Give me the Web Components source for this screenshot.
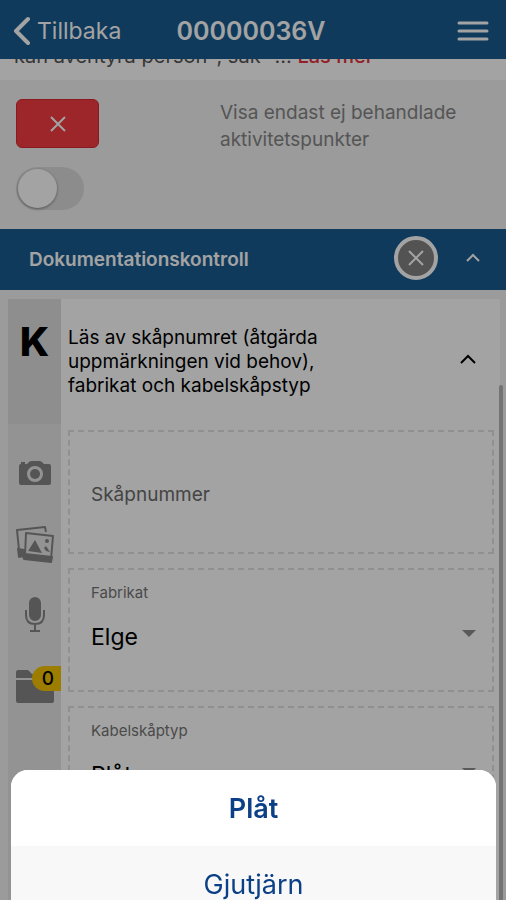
<!DOCTYPE html>
<html lang="sv">
<head>
<meta charset="utf-8">
<meta name="viewport" content="width=device-width, initial-scale=1">
<title>Dokumentationskontroll</title>
<style>
    body {
        margin: 0;
        background: #fff;
        color: #000;
        font-family: Inter, "Liberation Sans", sans-serif;
        overflow: hidden;
    }
</style>
</head>
<body>
<inspection-page>
    <app-header slot="header" heading="00000036V">Tillbaka</app-header>
    <risk-notice>kan äventyra person-, sak- ... <a slot="more" href="#">Läs mer</a></risk-notice>
    <filter-bar>Visa endast ej behandlade aktivitetspunkter</filter-bar>
    <section-header>Dokumentationskontroll</section-header>
    <check-item code="K" files="0">
        <span slot="question">Läs av skåpnumret (åtgärda uppmärkningen vid behov), fabrikat och kabelskåpstyp</span>
        <text-field label="Skåpnummer"></text-field>
        <select-field label="Fabrikat" value="Elge"></select-field>
        <select-field label="Kabelskåptyp" value="Plåt"></select-field>
    </check-item>
    <action-sheet slot="overlay">
        <sheet-option selected>Plåt</sheet-option>
        <sheet-option>Gjutjärn</sheet-option>
    </action-sheet>
</inspection-page>

<script>
(function() {
    const define = (name, html, setup) => {
        const template = document.createElement('template');
        template.innerHTML = html;

        customElements.define(name, class extends HTMLElement {
            constructor() {
                super();
                this.attachShadow({mode: 'open'});
                this.shadowRoot.appendChild(template.content.cloneNode(true));
            }

            connectedCallback() {
                if (setup) {
                    setup(this, this.shadowRoot);
                }
            }
        });
    };

    define('inspection-page', `
        <style>
            :host {
                display: flex;
                flex-direction: column;
                height: 100vh;
            }
            main {
                flex: 1;
                min-height: 0;
                overflow: hidden;
            }
        </style>
        <slot name="header"></slot>
        <main><slot></slot></main>
        <slot name="overlay"></slot>
    `);

    define('app-header', `
        <style>
            :host {
                display: grid;
                grid-template-columns: 1fr auto 1fr;
                align-items: center;
                height: 59px;
                flex: none;
                padding: 2px 16px 0 12px;
                box-sizing: border-box;
                background: #185b91;
                color: #fff;
            }
            button {
                display: flex;
                align-items: center;
                gap: 7px;
                border: 0;
                padding: 0;
                background: none;
                color: inherit;
                font: 23px Inter, sans-serif;
                cursor: pointer;
            }
            .menu {
                justify-self: end;
            }
            h1 {
                margin: 0;
                font-size: 25px;
                font-weight: 600;
            }
            svg {
                display: block;
                fill: none;
                stroke: currentColor;
                stroke-linecap: round;
            }
        </style>
        <button class="back">
            <svg width="18" height="30" stroke-width="4" stroke-linejoin="round"><path d="M16 3 4 15 16 27"/></svg>
            <slot></slot>
        </button>
        <h1></h1>
        <button class="menu" aria-label="Meny">
            <svg width="34" height="22" stroke-width="3"><path d="M3 3h28M3 11h28M3 19h28"/></svg>
        </button>
    `, (el, root) => {
        root.querySelector('h1').textContent = el.getAttribute('heading');
    });

    /* last line of the notice, scrolled in under the header */
    define('risk-notice', `
        <style>
            :host {
                display: flex;
                align-items: flex-end;
                height: 21px;
                overflow: hidden;
                padding: 0 14px;
                font-size: 20px;
                line-height: 24px;
                color: #555;
            }
            p {
                margin: 0 0 12px;
                white-space: pre;
            }
            ::slotted(a) {
                color: #e5323c;
                font-weight: 500;
                text-decoration: none;
            }
        </style>
        <p><slot></slot><slot name="more"></slot></p>
    `);

    define('filter-bar', `
        <style>
            :host {
                display: grid;
                grid-template-columns: 1fr 270px;
                align-content: start;
                gap: 14px 0;
                padding: 19px 16px;
                background: #f2f2f2;
            }
            button {
                display: grid;
                place-items: center;
                width: 83px;
                height: 49px;
                border: 1px solid #d92a33;
                border-radius: 6px;
                background: #f43c40;
                color: #fff;
                cursor: pointer;
            }
            svg {
                fill: none;
                stroke: currentColor;
                stroke-width: 2;
            }
            label {
                font-size: 19px;
                line-height: 27px;
                color: #868686;
            }
            input {
                appearance: none;
                display: flex;
                width: 68px;
                height: 43px;
                margin: 0;
                padding: 2px;
                box-sizing: border-box;
                border-radius: 22px;
                background: #dcdcdc;
            }
            input::before {
                content: "";
                width: 39px;
                height: 39px;
                border-radius: 50%;
                background: #fff;
                box-shadow: 0 1px 3px rgba(0, 0, 0, .4);
            }
            input:checked {
                justify-content: flex-end;
            }
        </style>
        <button aria-label="Ej behandlad">
            <svg width="16" height="16"><path d="M1 1l14 14M15 1 1 15"/></svg>
        </button>
        <label for="only"><slot></slot></label>
        <input id="only" type="checkbox" role="switch">
    `);

    define('section-header', `
        <style>
            :host {
                display: flex;
                align-items: center;
                height: 61px;
                padding: 0 26px 4px 29px;
                box-sizing: border-box;
                background: #185b91;
                color: #fff;
            }
            h2 {
                flex: 1;
                margin: 0;
                padding-top: 4px;
                font-size: 19px;
                font-weight: 600;
            }
            button {
                display: grid;
                place-items: center;
                border: 0;
                padding: 0;
                background: none;
                color: inherit;
                cursor: pointer;
            }
            .status {
                width: 44px;
                height: 44px;
                margin-right: 28px;
                box-sizing: border-box;
                border: 4px solid #fff;
                border-radius: 50%;
                background: #828282;
            }
            svg {
                fill: none;
                stroke: currentColor;
                stroke-width: 2;
            }
        </style>
        <h2><slot></slot></h2>
        <button class="status" aria-label="Ej behandlad">
            <svg width="16" height="16"><path d="M1 1l14 14M15 1 1 15"/></svg>
        </button>
        <button aria-label="Fäll ihop">
            <svg width="14" height="9"><path d="M1 8l6-6 6 6"/></svg>
        </button>
    `);

    define('check-item', `
        <style>
            :host {
                display: grid;
                grid-template-columns: 53px 1fr;
                padding: 9px 6px 0 8px;
                background: #f2f2f2;
                position: relative;
            }
            aside {
                display: flex;
                flex-direction: column;
                background: #e7e7e7;
            }
            .code {
                height: 125px;
                padding-top: 18px;
                box-sizing: border-box;
                background: #dedede;
                font-size: 40px;
                line-height: 50px;
                font-weight: 800;
                text-align: center;
            }
            .tools {
                display: flex;
                flex-direction: column;
                align-items: center;
                padding-top: 13px;
            }
            .tools button {
                display: grid;
                place-items: center;
                width: 53px;
                height: 71px;
                border: 0;
                padding: 0;
                background: none;
                color: #868686;
                position: relative;
                cursor: pointer;
            }
            .badge {
                position: absolute;
                top: 16px;
                right: 0;
                width: 29px;
                padding-left: 3px;
                box-sizing: border-box;
                border-radius: 13px 0 0 13px;
                background: #f5c400;
                color: #000;
                font: 500 19px/25px Inter, sans-serif;
            }
            .body {
                background: #fff;
                min-width: 0;
            }
            .question {
                display: flex;
                align-items: center;
                justify-content: space-between;
                height: 131px;
                padding: 0 24px 6px 7px;
                box-sizing: border-box;
            }
            p {
                width: 290px;
                margin: 0;
                font-size: 19px;
                line-height: 24px;
            }
            .toggle {
                border: 0;
                padding: 0 0 4px;
                background: none;
                color: inherit;
            }
            .fields {
                display: grid;
                gap: 14px;
                padding: 0 6px 80px 7px;
            }
            .thumb {
                position: absolute;
                top: 95px;
                right: 3px;
                bottom: 0;
                width: 4px;
                border-radius: 2px;
                background: #b5b5b5;
            }
        </style>
        <aside>
            <div class="code"></div>
            <div class="tools">
                <button aria-label="Ta foto">
                    <svg width="34" height="28" fill="currentColor">
                        <path fill-rule="evenodd" d="M3 5h6l2-2q1-1 3-1h7q2 0 3 1l2 2h5q2 0 2 2v17q0 2-2 2H3q-2 0-2-2V7q0-2 2-2zM17 7a8 8 0 1 0 0 16 8 8 0 0 0 0-16z"/>
                        <circle cx="17" cy="15" r="5"/>
                        <path d="M3 3h4v2H3z"/>
                    </svg>
                </button>
                <button aria-label="Bilder">
                    <svg width="40" height="40" fill="none" stroke="currentColor" stroke-width="2" stroke-linejoin="round">
                        <path d="M4 26 2 6l28-3 1 5"/>
                        <path d="M3 25l6 1 1 4 27 3-1 5-27-3-1-3-4 1z" fill="currentColor"/>
                        <path d="M11 9l27 3-2 23-26-3z"/>
                        <path d="M13 27l7-11 7 13zM29 24l2-2 4 6-4-1z" fill="currentColor" stroke="none"/>
                        <circle cx="32" cy="17" r="2" fill="currentColor" stroke="none"/>
                    </svg>
                </button>
                <button aria-label="Spela in">
                    <svg width="22" height="38" fill="none" stroke="currentColor" stroke-width="2">
                        <rect x="6" y="2" width="10" height="22" rx="5" fill="currentColor"/>
                        <path d="M2 14v5q0 9 9 9t9-9v-5M11 28v7M6 35h10"/>
                    </svg>
                </button>
                <button aria-label="Filer">
                    <svg width="38" height="34" fill="currentColor">
                        <path d="M0 9V3q0-2 2-2h9q2 0 3 2l2 2h20q2 0 2 2v2zM0 11h38v21q0 2-2 2H2q-2 0-2-2z"/>
                    </svg>
                    <span class="badge"></span>
                </button>
            </div>
        </aside>
        <div class="body">
            <div class="question">
                <p><slot name="question"></slot></p>
                <button class="toggle" aria-label="Fäll ihop">
                    <svg width="16" height="10" fill="none" stroke="currentColor" stroke-width="2"><path d="M1 9l7-7 7 7"/></svg>
                </button>
            </div>
            <div class="fields"><slot></slot></div>
        </div>
        <div class="thumb"></div>
    `, (el, root) => {
        root.querySelector('.code').textContent = el.getAttribute('code');
        root.querySelector('.badge').textContent = el.getAttribute('files');
    });

    const fieldStyle = `
        :host {
            display: flex;
            flex-direction: column;
            height: 124px;
            padding: 0 16px 0 21px;
            box-sizing: border-box;
            border: 2px dashed #e2e2e2;
        }
    `;

    define('text-field', `
        <style>
            ${fieldStyle}
            input {
                flex: 1;
                min-width: 0;
                border: 0;
                padding: 4px 0 0;
                background: none;
                font: 19px Inter, sans-serif;
            }
            input::placeholder {
                color: #6c6c6c;
            }
        </style>
        <input type="text">
    `, (el, root) => {
        const input = root.querySelector('input');
        input.placeholder = el.getAttribute('label');
        input.setAttribute('aria-label', el.getAttribute('label'));
    });

    define('select-field', `
        <style>
            ${fieldStyle}
            label {
                padding-top: 13px;
                font-size: 15px;
                line-height: 20px;
                color: #757575;
            }
            .control {
                display: flex;
                align-items: center;
                margin-top: 19px;
            }
            select {
                appearance: none;
                flex: 1;
                height: 30px;
                border: 0;
                padding: 0;
                background: none;
                color: #000;
                font: 23px Inter, sans-serif;
            }
            svg {
                fill: #8c8c8c;
                margin-bottom: 8px;
            }
        </style>
        <label for="field"></label>
        <div class="control">
            <select id="field"><option></option></select>
            <svg width="14" height="7"><path d="M0 0h14L7 7z"/></svg>
        </div>
    `, (el, root) => {
        root.querySelector('label').textContent = el.getAttribute('label');
        root.querySelector('option').textContent = el.getAttribute('value');
    });

    define('action-sheet', `
        <style>
            :host {
                position: fixed;
                inset: 0;
                display: flex;
                flex-direction: column;
                justify-content: flex-end;
                padding: 0 10px 0 11px;
                overflow: hidden;
                background: rgba(0, 0, 0, .36);
            }
            /* the sheet is still sliding in, its last row is cut by the window */
            .sheet {
                margin-bottom: -22px;
                border-radius: 17px 17px 0 0;
                overflow: hidden;
                background: #f8f8f8;
            }
        </style>
        <div class="sheet"><slot></slot></div>
    `);

    define('sheet-option', `
        <style>
            :host {
                display: block;
            }
            button {
                display: block;
                width: 100%;
                height: 76px;
                border: 0;
                padding: 0;
                background: none;
                color: #0b3f86;
                font: 27px Inter, sans-serif;
                cursor: pointer;
            }
            :host([selected]) button {
                background: #fff;
                font-weight: 600;
            }
        </style>
        <button><slot></slot></button>
    `);
})();
</script>
</body>
</html>
